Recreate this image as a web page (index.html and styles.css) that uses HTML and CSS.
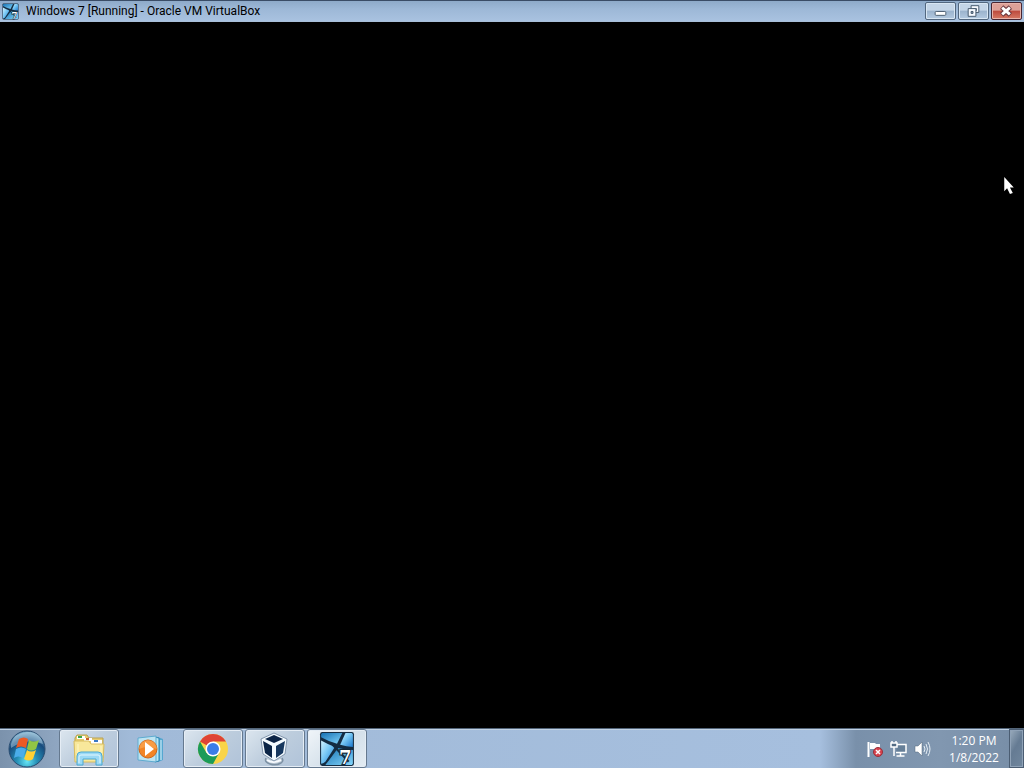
FILE: index.html
```html
<!DOCTYPE html>
<html lang="en">
<head>
<meta charset="utf-8">
<title>Windows 7 [Running] - Oracle VM VirtualBox</title>
<link rel="stylesheet" href="styles.css">
</head>
<body>
<svg class="defs" aria-hidden="true">
  <defs>
    <linearGradient id="sky" x1="0" y1="0" x2="1" y2="1"><stop offset="0" stop-color="#d2f3ff"/><stop offset=".45" stop-color="#78c8f5"/><stop offset="1" stop-color="#1c78cc"/></linearGradient>
    <linearGradient id="pane" x1="0" y1="0" x2="1" y2="1"><stop offset="0" stop-color="#1772b4"/><stop offset="1" stop-color="#83d5fb"/></linearGradient>
    <symbol id="vm7" viewBox="0 0 34 34">
      <rect x="1" y="1" width="32" height="32" rx="2" fill="#142c42"/>
      <path d="M3 2h19l-5 10Q9 10 2 6V3z" fill="url(#pane)"/>
      <path d="M25 2h6l1 1v12q-6 0-12-2z" fill="url(#sky)"/>
      <path d="M2 9q7 4 13 6L6 29q-2 2-4 2z" fill="url(#sky)"/>
      <path d="M18 16q7 2 14 2v13l-1 1H6q4-5 12-16z" fill="url(#pane)"/>
      <path d="M13 13l15 16" stroke="#142c42" stroke-width="2"/>
      <text x="19" y="31" class="version">7</text>
    </symbol>
  </defs>
</svg>
<main class="desktop">
  <header class="titlebar">
    <svg class="title-icon" aria-hidden="true"><use href="#vm7"/></svg>
    <h1 class="title">Windows 7 [Running] - Oracle VM VirtualBox</h1>
    <div class="controls">
      <button class="control" aria-label="Minimize"><svg viewBox="0 0 30 16"><rect x="9.500" y="8.500" width="11" height="4" rx="1" fill="#fff" stroke="#4b5d70"/></svg></button>
      <button class="control" aria-label="Restore"><svg viewBox="0 0 30 16"><g fill="#f7faff" stroke="#43576b"><path d="M12.500 2.500h8v7h-8z"/><path d="M15 5.500h3v2h-3z"/><path d="M9.500 5.500h8v8h-8z"/><path d="M12.500 8.500h2v2h-2z" fill="#91a8c0"/></g></svg></button>
      <button class="control close" aria-label="Close"><svg viewBox="0 0 30 16"><path d="M10 4l9 8M19 4l-9 8" stroke="#65333a" stroke-width="5"/><path d="M10.500 4.500l8 7M18.500 4.500l-8 7" stroke="#fff" stroke-width="3"/></svg></button>
    </div>
  </header>
  <section class="screen" aria-label="Virtual machine display">
    <svg class="pointer" viewBox="0 0 12 20" aria-hidden="true"><path d="M1 1v15l3-3 3 6 3-1-3-6h4z" fill="#fff"/></svg>
  </section>
  <footer class="taskbar">
    <button class="start" aria-label="Start">
      <svg viewBox="0 0 40 40">
        <defs><radialGradient id="orb" cx=".5" cy=".85" r=".8"><stop offset="0" stop-color="#65e4f5"/><stop offset=".35" stop-color="#258fb6"/><stop offset=".75" stop-color="#174b7d"/><stop offset="1" stop-color="#71a4c4"/></radialGradient></defs>
        <circle cx="20" cy="20" r="18" fill="url(#orb)" stroke="#294c70"/>
        <path d="M4 15Q7 4 20 3t16 12Q20 8 4 19z" fill="#c6e1ee" opacity=".45"/>
        <path d="M12 10q5-3 9 0l-2 9q-5-3-10 0z" fill="#ed5a24"/>
        <path d="M22 11q5 3 10 0l-3 9q-5 3-9 0z" fill="#91c544"/>
        <path d="M9 20q5-3 10 0l-3 9q-5-3-9 0z" fill="#4aadea"/>
        <path d="M20 21q4 3 9 0l-3 9q-4 3-9 0z" fill="#ffd033"/>
      </svg>
    </button>
    <nav class="apps" aria-label="Taskbar applications">
      <button class="app open" aria-label="Windows Explorer"><svg viewBox="0 0 36 36">
        <path d="M4 7l2-3h10l2 3h14v20H4z" fill="#e8cd70" stroke="#b9a150"/>
        <path d="M6 5h8v3H6z" fill="#fff"/><path d="M7 5h4v2H7z" fill="#39a54b"/>
        <path d="M13 7h8v3h-8z" fill="#fff"/><path d="M15 7h3v2h-3z" fill="#c85b2c"/>
        <path d="M20 9h11v4H20z" fill="#fff"/><path d="M23 9h4v2h-4z" fill="#3978c6"/>
        <path d="M3 10h15l2 3h13l-1 18H4z" fill="#f8e89b" stroke="#d7bc61"/>
        <path d="M7 13v15M30 15v7" stroke="#fff7c6"/>
        <path d="M6 34v-9q0-4 4-4h17q4 0 4 4v9h-6v-6H12v6z" fill="#9bd9f5" stroke="#4ba8d2"/>
        <path d="M8 32v-6q0-2 2-2h17q2 0 2 2v6" fill="none" stroke="#e1f6ff"/>
      </svg></button>
      <button class="app" aria-label="Windows Media Player"><svg viewBox="0 0 36 36">
        <path d="M25 6l5 2v21l-5 2z" fill="#55a7d0"/><path d="M22 6l4 1v23l-4 1z" fill="#b8e8f6" stroke="#2b86b4"/><path d="M28 9v20" stroke="#e2f8ff"/>
        <path d="M5 7l18-2v26L5 29z" fill="#bce4f2" stroke="#5eabd0"/>
        <circle cx="15" cy="18" r="9" fill="#f18425" stroke="#ce6518"/><path d="M6 18a9 9 0 0 1 18 0q-9-4-18 0" fill="#ffb363" opacity=".5"/><path d="M12 11l9 7-9 7z" fill="#fff"/>
      </svg></button>
      <button class="app open" aria-label="Google Chrome"><svg viewBox="0 0 36 36">
        <circle cx="18" cy="18" r="15" fill="#f9d448"/>
        <path d="M18 18L5 10.500A15 15 0 0 1 31 10.500H18z" fill="#df4335"/>
        <path d="M18 33A15 15 0 0 1 5 10.500L11.500 22 18 25l6-3z" fill="#1b9b58"/>
        <circle cx="18" cy="18" r="7.500" fill="#fff"/><circle cx="18" cy="18" r="6" fill="#3b7de8"/>
      </svg></button>
      <button class="app open" aria-label="Oracle VM VirtualBox"><svg viewBox="0 0 36 36">
        <path d="M9 27q-2 4 4 6 6 2 11-1 3-2 1-5" fill="#b7c6d3" stroke="#7d91a4" stroke-width="1.500"/>
        <path d="M10 29q6 4 14 0" fill="none" stroke="#f8fbff" stroke-width="2"/>
        <path d="M17 2l13 6-2 15-11 7-11-7L4 8z" fill="#f4fbff" stroke="#8296ad"/>
        <path d="M17 4l9 4-9 4-9-4z" fill="#0d2547"/><path d="M6 10l9 5v12l-7-5z" fill="#0b2547"/><path d="M28 10l-9 5v12l7-5z" fill="#17385f"/>
      </svg></button>
      <button class="app open active" aria-label="Windows 7 virtual machine"><svg><use href="#vm7"/></svg></button>
    </nav>
    <div class="tray">
      <button class="tray-button" aria-label="Action Center"><svg viewBox="0 0 18 18"><path d="M2.500 2v15" stroke="#fff" stroke-width="2"/><path d="M4 3h5l1 1h4v7H8V9H4z" fill="#fff"/><circle cx="12" cy="12" r="4.500" fill="#d9434e" stroke="#972f3a"/><path d="M10 10l4 4m0-4l-4 4" stroke="#fff" stroke-width="1.500"/></svg></button>
      <button class="tray-button" aria-label="Network"><svg viewBox="0 0 18 18"><path d="M7 4.500h9v8H6" fill="#667f98" stroke="#fff" stroke-width="1.500"/><path d="M10.500 13v3m-4 0h8" stroke="#fff" stroke-width="1.500"/><path d="M2 1v2m4-2v2M1 3h6v4H1zM4 7v9" fill="#526b84" stroke="#fff" stroke-width="1.500"/></svg></button>
      <button class="tray-button" aria-label="Volume"><svg viewBox="0 0 18 18"><path d="M1 6h3l4-4v14l-4-4H1z" fill="#fff" stroke="#526479" stroke-width=".5"/><path d="M10 6q2 3 0 6m2-8q3 5 0 10m2-12q4 7 0 14" fill="none" stroke="#e4edf4"/></svg></button>
      <button class="clock"><time datetime="2022-01-08T13:20">1:20 PM<br>1/8/2022</time></button>
    </div>
    <button class="show-desktop" aria-label="Show desktop"></button>
  </footer>
</main>
</body>
</html>
```

FILE: styles.css
```css
* { box-sizing: border-box; }
body { margin: 0; font-family: "Open Sans", "Noto Sans", sans-serif; background: #000; }
button { padding: 0; border: 0; background: none; font: inherit; }
svg { display: block; }
.defs { position: absolute; width: 0; height: 0; }
.version { font: 700 17px "DejaVu Serif", serif; fill: #fff; stroke: #142838; stroke-width: 2px; paint-order: stroke; }
.desktop { min-height: 100vh; display: flex; flex-direction: column; }

.titlebar {
  display: flex;
  align-items: center;
  height: 22px;
  padding-left: 2px;
  border-top: 1px solid #3a4c66;
  border-bottom: 1px solid #a9bfd9;
  background: linear-gradient(#8eaac9, #9db8d7 40%, #a9c2e0);
}
.title-icon { width: 17px; height: 17px; }
.title { margin: 0 0 0 7px; font-family: Roboto, "Open Sans", sans-serif; font-size: 12px; font-weight: 400; line-height: 20px; white-space: nowrap; color: #000; }
.controls { display: flex; gap: 2px; margin-left: auto; padding-right: 2px; }
.control {
  width: 31px;
  height: 18px;
  border: 1px solid #52677f;
  border-radius: 2px;
  background: linear-gradient(#c4d5e7 45%, #9bb3cd 50%, #b4cae1);
  box-shadow: inset 0 0 0 1px #d8e6f3;
}
.control svg { width: 100%; height: 16px; }
.close {
  border-color: #482632;
  background: linear-gradient(#dda198 45%, #bd4a3d 50%, #d77a65);
  box-shadow: inset 0 0 0 1px #e7b3aa;
}

.screen { flex: 1; position: relative; background: #000; }
.pointer { position: absolute; right: 9px; top: 154px; width: 12px; height: 19px; }

.taskbar {
  display: flex;
  height: 40px;
  border-top: 1px solid #536579;
  background: linear-gradient(90deg, #7b92ac, #90a7c2 60px, #a1bad8 130px, #a6bfde 820px, #7990aa 856px, #8197b0 940px, #778da6);
  box-shadow: inset 0 1px #c0d1e4;
}
.start { width: 58px; padding-left: 7px; }
.start svg { width: 40px; height: 40px; }
.apps { display: flex; gap: 2px; padding-left: 1px; }
.app { display: grid; place-items: center; width: 60px; height: 39px; border: 1px solid transparent; border-radius: 3px; }
.app svg { width: 36px; height: 36px; }
.open {
  border-color: #65798f;
  background: linear-gradient(135deg, #dce6ef, #bdcddd 50%, #b0c3d9);
  box-shadow: inset 0 0 0 1px #e5edf5;
}
.active { background: linear-gradient(135deg, #f0f5f9, #d4e0ea 55%, #e3ecf3); }
.tray { display: flex; align-items: center; margin-left: auto; }
.tray-button { width: 24px; height: 24px; display: grid; place-items: center; }
.tray-button svg { width: 18px; height: 18px; }
.clock { width: 74px; padding-left: 4px; font-size: 12px; line-height: 17px; text-align: center; color: #fff; }
.show-desktop {
  width: 15px;
  border: 1px solid #4b5d72;
  background: linear-gradient(120deg, #9aacbd, #657b93 45%, #71879e);
  box-shadow: inset 0 0 0 1px #8fa2b7;
}
```
